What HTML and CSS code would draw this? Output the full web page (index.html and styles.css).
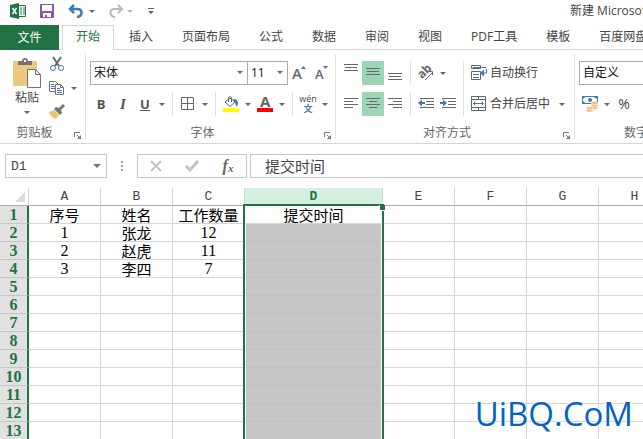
FILE: index.html
```html
<!DOCTYPE html>
<html lang="zh-CN">
<head>
<meta charset="utf-8">
<meta name="viewport" content="width=device-width, initial-scale=1">
<title>新建 Microsoft Excel 工作表</title>
<link rel="stylesheet" href="styles.css">
</head>
<body>
<header class="titlebar">
  <svg class="app-logo" width="16" height="16" viewBox="0 0 16 16" aria-hidden="true">
    <path d="M9 2.500h6.500v11H9" fill="#fff" stroke="#217346"/>
    <path d="M10 5h2M13 5h2M10 7h2M13 7h2M10 9h2M13 9h2M10 11h2M13 11h2" stroke="#217346"/>
    <path d="M0 2l9-2v16l-9-2z" fill="#217346"/>
    <path d="M2.500 5l4 6M6.500 5l-4 6" stroke="#fff" stroke-width="1.500"/>
  </svg>
  <button class="quick" aria-label="保存">
    <svg width="14" height="14" viewBox="0 0 14 14"><path fill="#8e56b0" fill-rule="evenodd" d="M0 0h14v14H0zM2 1v6h10V1zM3 9v4h2v-2h2v2h4V9z"/></svg>
  </button>
  <button class="quick" aria-label="撤消">
    <svg width="16" height="14" viewBox="0 0 16 14"><path d="M6 1L2 5l4 4M2 5h7c6 0 6 7 0 8" fill="none" stroke="#3f78b5" stroke-width="2.500"/></svg>
  </button>
  <button class="caret-btn" aria-label="撤消选项"><span class="caret"></span></button>
  <button class="quick redo" aria-label="恢复">
    <svg width="16" height="14" viewBox="0 0 16 14"><path d="M10 1l4 4-4 4M14 5H7C1 5 1 12 7 13" fill="none" stroke="#b9b9b9" stroke-width="2"/></svg>
  </button>
  <button class="caret-btn" aria-label="恢复选项"><span class="caret pale"></span></button>
  <button class="quick customize" aria-label="自定义快速访问工具栏">
    <svg width="6" height="6" viewBox="0 0 6 6"><path d="M0 0h6v1H0zM0 3h6L3 6z" fill="#666"/></svg>
  </button>
  <div class="title">新建 Microsoft Excel 工作表</div>
</header>

<nav class="tabs">
  <button class="file-tab">文件</button>
  <a class="tab active" href="#home">开始</a>
  <a class="tab" href="#insert">插入</a>
  <a class="tab" href="#layout">页面布局</a>
  <a class="tab" href="#formulas">公式</a>
  <a class="tab" href="#data">数据</a>
  <a class="tab" href="#review">审阅</a>
  <a class="tab" href="#view">视图</a>
  <a class="tab" href="#pdf">PDF工具</a>
  <a class="tab" href="#template">模板</a>
  <a class="tab" href="#netdisk">百度网盘</a>
</nav>

<section class="ribbon" id="home">
  <div class="group clipboard">
    <div class="tools">
      <button class="paste">
        <svg width="28" height="30" viewBox="0 0 28 30" aria-hidden="true">
          <path d="M0 3h24v25H0z" fill="#edc87e"/>
          <path d="M5 3h4c0-4 6-4 6 0h4v4H5z" fill="#737373"/><path d="M11 2h2v2h-2z" fill="#fff"/>
          <path d="M14.500 11.500h8l5 5v13h-13z" fill="#fff" stroke="#737373"/><path d="M22.500 11.500v5h5" fill="none" stroke="#737373"/>
        </svg>
        <span>粘贴</span>
        <span class="caret"></span>
      </button>
      <div class="clip-actions">
        <button class="tool" aria-label="剪切">
          <svg width="16" height="16" viewBox="0 0 16 16"><path d="M4 1l6 9M12 1L6 10" stroke="#666" stroke-width="2"/><g fill="none" stroke="#3f78b5"><circle cx="4" cy="12" r="2.500"/><circle cx="12" cy="12" r="2.500"/></g></svg>
        </button>
        <span class="with-caret">
          <button class="tool" aria-label="复制">
            <svg width="16" height="16" viewBox="0 0 16 16"><path d="M.5 1.500h6l3 3v7h-9z" fill="#fff" stroke="#737373"/><path d="M2 4.500h3M2 6.500h4M2 8.500h4" stroke="#3f78b5"/><path d="M6.500 4.500h5l3 3v7h-8z" fill="#fff" stroke="#737373"/><path d="M11.500 4.500v3h3" fill="none" stroke="#737373"/><path d="M8 8.500h3M8 10.500h5M8 12.500h5" stroke="#3f78b5"/></svg>
          </button>
          <button class="caret-btn" aria-label="复制选项"><span class="caret"></span></button>
        </span>
        <button class="tool" aria-label="格式刷">
          <svg width="16" height="16" viewBox="0 0 16 16"><path d="M0 8l5-2 5 5-3 4c-3-1-6-3-7-7z" fill="#edc276"/><path d="M5 5l2-2 3 1 4-4 2 2-4 4 1 3-2 2z" fill="#737373"/></svg>
        </button>
      </div>
    </div>
    <div class="group-label"><span>剪贴板</span>
      <button class="launcher" aria-label="剪贴板设置"><svg width="7" height="7" viewBox="0 0 7 7"><path d="M.5 5V.5H6M3 3l2 2" fill="none" stroke="#777"/><path d="M7 3v4H3z" fill="#777"/></svg></button>
    </div>
  </div>

  <div class="group font">
    <div class="tools stack">
      <div class="row">
        <span class="combo font-name"><select aria-label="字体"><option>宋体</option></select><span class="caret"></span></span>
        <span class="combo font-size"><select aria-label="字号"><option>11</option></select><span class="caret"></span></span>
        <button class="tool" aria-label="增大字号"><svg width="14" height="16" viewBox="0 0 14 16"><text class="glyph" x="0" y="14" font-size="15">A</text><path d="M9 4h5l-2.500-3z" fill="#3f78b5"/></svg></button>
        <button class="tool" aria-label="减小字号"><svg width="14" height="16" viewBox="0 0 14 16"><text class="glyph" x="1" y="14" font-size="13">A</text><path d="M9 1h5l-2.500 3z" fill="#3f78b5"/></svg></button>
      </div>
      <div class="row">
        <button class="tool letter bold">B</button>
        <button class="tool letter italic">I</button>
        <button class="tool letter underline">U</button>
        <button class="caret-btn" aria-label="下划线选项"><span class="caret"></span></button>
        <span class="sep"></span>
        <button class="tool" aria-label="边框"><svg width="14" height="14" viewBox="0 0 14 14"><path d="M.5.5h12v12H.5zM6.500.5v12M.5 6.500h12" fill="none" stroke="#666"/></svg></button>
        <button class="caret-btn" aria-label="边框选项"><span class="caret"></span></button>
        <span class="sep"></span>
        <button class="tool" aria-label="填充颜色"><svg width="16" height="16" viewBox="0 0 16 16"><path d="M2 6l5-4 5 4-5 4.500z" fill="#fff" stroke="#666"/><path d="M5.500 6V1.500c0-1 3-1 3 0V6" fill="none" stroke="#666"/><path d="M10 3c5 0 6 3 4 8-1-1-1-3-2-4z" fill="#3f78b5"/><path d="M0 12h16v4H0z" fill="#ff0"/></svg></button>
        <button class="caret-btn" aria-label="填充颜色选项"><span class="caret"></span></button>
        <button class="tool" aria-label="字体颜色"><svg width="16" height="16" viewBox="0 0 16 16"><text class="glyph heavy" x="3" y="11" font-size="15">A</text><path d="M0 12h16v4H0z" fill="red"/></svg></button>
        <button class="caret-btn" aria-label="字体颜色选项"><span class="caret"></span></button>
        <span class="sep"></span>
        <button class="tool phonetic" aria-label="显示拼音"><span>wén</span><b>文</b></button>
        <button class="caret-btn" aria-label="拼音选项"><span class="caret"></span></button>
      </div>
    </div>
    <div class="group-label"><span>字体</span>
      <button class="launcher" aria-label="字体设置"><svg width="7" height="7" viewBox="0 0 7 7"><path d="M.5 5V.5H6M3 3l2 2" fill="none" stroke="#777"/><path d="M7 3v4H3z" fill="#777"/></svg></button>
    </div>
  </div>

  <div class="group align">
    <div class="tools">
      <div class="stack">
        <div class="row">
          <button class="tool" aria-label="顶端对齐"><svg width="14" height="18" viewBox="0 0 14 18"><path d="M0 .5h14M1 3.500h12M0 6.500h14" stroke="#666"/></svg></button>
          <button class="tool on" aria-label="垂直居中"><svg width="14" height="18" viewBox="0 0 14 18"><path d="M0 4.500h14M1 7.500h12M0 10.500h14" stroke="#666"/></svg></button>
          <button class="tool" aria-label="底端对齐"><svg width="14" height="18" viewBox="0 0 14 18"><path d="M0 9.500h14M1 12.500h12M0 15.500h14" stroke="#666"/></svg></button>
          <span class="sep"></span>
          <button class="tool" aria-label="方向"><svg width="16" height="16" viewBox="0 0 16 16"><text class="glyph heavy" x="0" y="11" font-size="12" transform="rotate(-45 6 8)">ab</text><path d="M7 15l8-8M11 6.500h3.500V10" fill="none" stroke="#666"/></svg></button>
          <button class="caret-btn" aria-label="方向选项"><span class="caret"></span></button>
        </div>
        <div class="row">
          <button class="tool" aria-label="左对齐"><svg width="14" height="12" viewBox="0 0 14 12"><path d="M0 .5h14M0 3.500h9M0 6.500h14M0 9.500h9" stroke="#666"/></svg></button>
          <button class="tool on" aria-label="居中"><svg width="14" height="12" viewBox="0 0 14 12"><path d="M0 .5h14M3 3.500h8M0 6.500h14M3 9.500h8" stroke="#666"/></svg></button>
          <button class="tool" aria-label="右对齐"><svg width="14" height="12" viewBox="0 0 14 12"><path d="M0 .5h14M5 3.500h9M0 6.500h14M5 9.500h9" stroke="#666"/></svg></button>
          <span class="sep"></span>
          <button class="tool" aria-label="减少缩进量"><svg width="16" height="12" viewBox="0 0 16 12"><path d="M2 .5h14M8 3.500h8M8 6.500h8M2 9.500h14" stroke="#666"/><path d="M0 5l4-3.500V4h3v2H4v2.500z" fill="#3f78b5"/></svg></button>
          <button class="tool" aria-label="增加缩进量"><svg width="16" height="12" viewBox="0 0 16 12"><path d="M2 .5h14M8 3.500h8M8 6.500h8M2 9.500h14" stroke="#666"/><path d="M7 5L3 1.500V4H0v2h3v2.500z" fill="#3f78b5"/></svg></button>
        </div>
      </div>
      <span class="sep tall"></span>
      <div class="stack">
        <button class="wide"><svg width="16" height="16" viewBox="0 0 16 16" aria-hidden="true"><path d="M.5.5h9v3h-9zM.5 6.500h9v8h-9z" fill="none" stroke="#666"/><path d="M2 2.500h13M2 9.500h6M2 12.500h6" stroke="#3f78b5"/><path d="M15.500 4v4h-3" fill="none" stroke="#3f78b5"/><path d="M9 8l4-3.500v7z" fill="#3f78b5"/></svg>自动换行</button>
        <div class="row">
          <button class="wide"><svg width="16" height="16" viewBox="0 0 16 16" aria-hidden="true"><path d="M.5.5h14v14H.5zM.5 3.500h14M.5 11.500h14M7.500.5v3M7.500 11.500v3" fill="none" stroke="#666"/><path d="M3 7.500h9M4.500 5.500l-2 2 2 2M10.500 5.500l2 2-2 2" fill="none" stroke="#3f78b5"/></svg>合并后居中</button>
          <button class="caret-btn roomy" aria-label="合并选项"><span class="caret"></span></button>
        </div>
      </div>
    </div>
    <div class="group-label"><span>对齐方式</span>
      <button class="launcher" aria-label="对齐设置"><svg width="7" height="7" viewBox="0 0 7 7"><path d="M.5 5V.5H6M3 3l2 2" fill="none" stroke="#777"/><path d="M7 3v4H3z" fill="#777"/></svg></button>
    </div>
  </div>

  <div class="group number">
    <div class="tools stack">
      <div class="row"><span class="combo format"><select aria-label="数字格式"><option>自定义</option></select><span class="caret"></span></span></div>
      <div class="row">
        <button class="tool" aria-label="会计数字格式"><svg width="16" height="16" viewBox="0 0 16 16"><path d="M0 0h16v8H0z" fill="#3f78b5"/><path d="M1 3l2-2h9l3 2v2l-2 2H3L1 5z" fill="#fff"/><circle cx="8" cy="4" r="2" fill="#3f78b5"/><g fill="#e9bd78" stroke="#fff" stroke-width=".5"><ellipse cx="12.500" cy="12" rx="3.500" ry="1.500"/><ellipse cx="12.500" cy="9.500" rx="3.500" ry="1.500"/><ellipse cx="12.500" cy="7" rx="3.500" ry="1.500"/><ellipse cx="7.500" cy="14.500" rx="3.500" ry="1.500"/><ellipse cx="7.500" cy="12" rx="3.500" ry="1.500"/></g></svg></button>
        <button class="caret-btn" aria-label="会计格式选项"><span class="caret"></span></button>
        <button class="tool percent">%</button>
      </div>
    </div>
    <div class="group-label"><span>数字</span></div>
  </div>
</section>

<section class="formula-bar">
  <div class="name-box"><input type="text" value="D1" aria-label="名称框"><span class="caret large"></span></div>
  <svg class="grip" width="2" height="10" viewBox="0 0 2 10" aria-hidden="true"><path d="M0 0h2v2H0zM0 4h2v2H0zM0 8h2v2H0z" fill="#a6a6a6"/></svg>
  <div class="entry-actions">
    <button aria-label="取消"><svg width="12" height="12" viewBox="0 0 12 12"><path d="M1 1l10 10M11 1L1 11" stroke="#c3c3c3" stroke-width="2"/></svg></button>
    <button aria-label="输入"><svg width="14" height="12" viewBox="0 0 14 12"><path d="M1 6l4 4 8-9" fill="none" stroke="#c3c3c3" stroke-width="3"/></svg></button>
    <button class="fx" aria-label="插入函数">f<small>x</small></button>
  </div>
  <input class="formula" type="text" value="提交时间" aria-label="编辑栏">
</section>

<main class="sheet">
  <table>
    <colgroup><col class="c-head"><col><col><col><col class="c-wide"><col><col><col><col></colgroup>
    <thead>
      <tr><th class="corner"><svg width="10" height="10" viewBox="0 0 10 10" aria-hidden="true"><path d="M10 0v10H0z" fill="#dcdcdc"/></svg></th><th>A</th><th>B</th><th>C</th><th class="picked">D</th><th>E</th><th>F</th><th>G</th><th>H</th></tr>
    </thead>
    <tbody>
      <tr><th>1</th><td>序号</td><td>姓名</td><td>工作数量</td><td>提交时间</td><td></td><td></td><td></td><td></td></tr>
      <tr><th>2</th><td class="num">1</td><td>张龙</td><td class="num">12</td><td class="fill"></td><td></td><td></td><td></td><td></td></tr>
      <tr><th>3</th><td class="num">2</td><td>赵虎</td><td class="num">11</td><td class="fill"></td><td></td><td></td><td></td><td></td></tr>
      <tr><th>4</th><td class="num">3</td><td>李四</td><td class="num">7</td><td class="fill"></td><td></td><td></td><td></td><td></td></tr>
      <tr><th>5</th><td></td><td></td><td></td><td class="fill"></td><td></td><td></td><td></td><td></td></tr>
      <tr><th>6</th><td></td><td></td><td></td><td class="fill"></td><td></td><td></td><td></td><td></td></tr>
      <tr><th>7</th><td></td><td></td><td></td><td class="fill"></td><td></td><td></td><td></td><td></td></tr>
      <tr><th>8</th><td></td><td></td><td></td><td class="fill"></td><td></td><td></td><td></td><td></td></tr>
      <tr><th>9</th><td></td><td></td><td></td><td class="fill"></td><td></td><td></td><td></td><td></td></tr>
      <tr><th>10</th><td></td><td></td><td></td><td class="fill"></td><td></td><td></td><td></td><td></td></tr>
      <tr><th>11</th><td></td><td></td><td></td><td class="fill"></td><td></td><td></td><td></td><td></td></tr>
      <tr><th>12</th><td></td><td></td><td></td><td class="fill"></td><td></td><td></td><td></td><td></td></tr>
      <tr><th>13</th><td></td><td></td><td></td><td class="fill"></td><td></td><td></td><td></td><td></td></tr>
    </tbody>
  </table>
  <div class="selection"></div>
</main>
<div class="watermark">UiBQ.CoM</div>
</body>
</html>
```
FILE: styles.css
```css
* { box-sizing: border-box; }

body {
  margin: 0;
  min-height: 100vh;
  overflow: hidden;
  background: #fff;
  color: #444;
  font: 12px/18px "Open Sans", "Noto Sans CJK SC", sans-serif;
}

button, input, select {
  margin: 0;
  padding: 0;
  border: 0;
  border-radius: 0;
  background: none;
  color: inherit;
  font: inherit;
}

svg { display: block; flex: none; overflow: visible; }

.caret {
  display: block;
  flex: none;
  border: 3px solid transparent;
  border-top-color: #666;
  border-bottom-width: 0;
}
.caret.pale { border-top-color: #b9b9b9; }
.caret.large { border-width: 4px 4px 0; border-top-color: #777; }

/* Title bar */
.titlebar {
  display: flex;
  align-items: center;
  height: 25px;
  padding: 0 0 3px 10px;
}
.app-logo { margin-right: 14px; }
.quick { margin-right: 14px; }
.quick + .caret-btn { margin-left: -12px; }
.quick.redo { margin: 0 12px 0 10px; }
.quick.customize { margin-left: 12px; }
.title {
  width: 73px;
  margin-left: auto;
  overflow: hidden;
  line-height: 22px;
  white-space: nowrap;
}

/* Ribbon tabs */
.tabs {
  display: flex;
  gap: 1px;
  height: 25px;
  overflow: hidden;
  line-height: 22px;
  white-space: nowrap;
  box-shadow: inset 0 -1px #d4d4d4;
}
.file-tab {
  flex: none;
  width: 59px;
  margin-right: 2px;
  background: #217346;
  color: #fff;
}
.tab {
  flex: none;
  padding: 0 13px;
  border: 1px solid transparent;
  border-bottom: 0;
  color: #444;
  text-decoration: none;
}
.tab.active {
  border-color: #d4d4d4;
  background: #fff;
  color: #217346;
}

/* Ribbon */
.ribbon {
  display: flex;
  height: 94px;
  overflow: hidden;
  border-bottom: 1px solid #d4d4d4;
}
.group {
  display: flex;
  flex: none;
  flex-direction: column;
  margin: 4px 0;
  padding-top: 7px;
  border-right: 1px solid #e1e1e1;
}
.clipboard { width: 86px; padding-top: 4px; }
.font { width: 250px; }
.align { width: 239px; }
.number { width: 122px; border-right: 0; }
.tools { display: flex; padding-left: 4px; }
.stack { display: flex; flex-direction: column; gap: 7px; }
.row { display: flex; align-items: center; height: 24px; }
.group-label {
  display: flex;
  align-items: flex-end;
  margin-top: auto;
  color: #666;
  line-height: 12px;
}
.group-label span { flex: 1; text-align: center; }
.launcher { display: flex; justify-content: center; width: 16px; }

.tool, .caret-btn {
  display: flex;
  flex: none;
  align-items: center;
  justify-content: center;
  width: 22px;
  height: 24px;
}
.caret-btn { width: 12px; }
.caret-btn.roomy { width: 24px; }
.tool.on { background: #9fd5b7; }
.sep { width: 1px; height: 24px; margin: 0 4px; background: #e1e1e1; }
.sep.tall { height: 55px; }
.wide {
  display: flex;
  align-items: center;
  gap: 3px;
  height: 24px;
  padding-left: 3px;
  white-space: nowrap;
}
.glyph { fill: #666; font-family: "Open Sans", sans-serif; font-weight: 600; }
.heavy { font-weight: 700; }
.letter { font-size: 13px; color: #555; }
.bold { font-weight: 700; }
.italic { font-family: "Liberation Serif", serif; font-size: 15px; font-style: italic; font-weight: 700; }
.underline { font-weight: 700; text-decoration: underline; }
.percent { font-size: 14px; }
.phonetic {
  flex-direction: column;
  font-size: 9px;
  line-height: 9px;
}
.phonetic b { color: #3f78b5; line-height: 11px; }

.paste {
  display: flex;
  flex-direction: column;
  align-items: center;
  width: 44px;
  line-height: 20px;
}
.paste .caret { margin-top: 3px; }
.clipboard .paste { margin-right: -3px; }
.clipboard .tools { padding-left: 5px; }
.clip-actions { display: flex; flex-direction: column; margin-top: -6px; }
.with-caret { display: flex; }

.combo { position: relative; flex: none; height: 24px; }
.combo select {
  width: 100%;
  height: 100%;
  padding-left: 3px;
  appearance: none;
  border: 1px solid #ababab;
  background: #fff;
  color: #111;
}
.combo .caret { position: absolute; top: 10px; right: 5px; pointer-events: none; }
.font-name { width: 158px; }
.font-size { width: 41px; margin-left: -1px; }
.format { width: 112px; }

/* Formula bar */
.formula-bar { display: flex; align-items: center; padding: 10px 0 10px 5px; }
.name-box, .entry-actions, .formula { height: 24px; border: 1px solid #c6c6c6; }
.name-box {
  display: flex;
  align-items: center;
  width: 102px;
  padding: 0 5px;
}
.name-box input {
  flex: 1;
  min-width: 0;
  font: 13px "Liberation Mono", monospace;
}
.grip { margin: 0 14px; }
.entry-actions { display: flex; width: 110px; margin-right: 3px; }
.entry-actions button { display: flex; flex: 1; align-items: center; justify-content: center; }
.entry-actions .fx {
  color: #666;
  font: italic 700 16px "Liberation Serif", serif;
}
.fx small { margin-top: 4px; font-size: 11px; }
.formula {
  flex: 1;
  min-width: 0;
  padding: 0 0 2px 14px;
  border-right: 0;
  font-size: 15px;
}

/* Worksheet */
.sheet { position: relative; overflow: hidden; }
table {
  width: 671px;
  table-layout: fixed;
  border-collapse: separate;
  border-spacing: 0;
}
col { width: 72px; }
.c-head { width: 29px; }
.c-wide { width: 138px; }
th, td {
  height: 18px;
  padding: 0;
  border: solid #d4d4d4;
  border-width: 0 1px 1px 0;
  line-height: 17px;
  text-align: center;
  white-space: nowrap;
}
td {
  color: #000;
  font-family: "Noto Sans CJK SC", sans-serif;
  font-size: 15px;
}
.num { font-family: "Liberation Serif", serif; font-size: 16px; }
thead th {
  border-bottom-color: #ababab;
  font: 13px/17px "Liberation Mono", monospace;
}
.corner svg { margin: 0 3px 0 auto; }
thead .picked { background: #d3f0e0; color: #217346; font-weight: 700; }
tbody th {
  border-right: 2px solid #217346;
  border-bottom-color: #c6c6c6;
  background: #e1e1e1;
  color: #217346;
  font: 700 16px/17px "Liberation Serif", serif;
}
.fill { border-color: #c0c0c0; background: #c6c6c6; }

/* Outline of the selected column, with its drag handle */
.selection {
  position: absolute;
  top: 16px;
  bottom: -4px;
  left: 243px;
  width: 141px;
  border: 2px solid #217346;
  box-shadow: inset 1px 0 #fff, inset -1px 0 #fff;
}
.selection::after {
  content: "";
  position: absolute;
  top: -1px;
  right: -3px;
  width: 5px;
  height: 5px;
  background: #217346;
  box-shadow: 0 1px #fff, -1px 0 #fff;
}

.watermark {
  position: absolute;
  right: 10px;
  bottom: 4px;
  color: #0563c8;
  font-size: 33px;
  line-height: 42px;
  text-shadow: 1px 0 #fff, -1px 0 #fff, 0 1px #fff, 0 -1px #fff;
}
```
